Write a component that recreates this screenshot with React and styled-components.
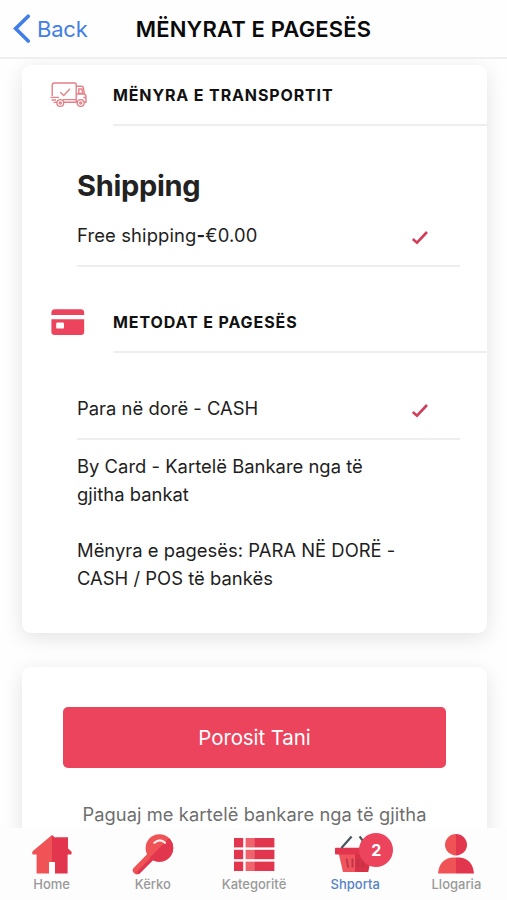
import React from 'react';
import styled, { createGlobalStyle } from 'styled-components';

const red = '#eb445c';

const App = () => {
  return (
    <Screen>
      <GlobalStyle />
      <Header>
        <Back>
          <svg width="18" height="30" viewBox="0 0 18 30">
            <path d="M15.2 2.2 L2.6 14.6 L15.2 27" />
          </svg>
          <span>Back</span>
        </Back>
        <h1>MËNYRAT E PAGESËS</h1>
      </Header>
      <Content>
        <Card $height={568}>
          <Section>
            <TruckIcon />
            <SectionTitle $spacing="0.87px">MËNYRA E TRANSPORTIT</SectionTitle>
          </Section>
          <Options $top={41}>
            <h2>Shipping</h2>
            <Option>
              <Text $spacing="0.14px">
                Free shipping<b>-</b>€0.00
              </Text>
              <CheckIcon />
            </Option>
          </Options>
          <Section $top={25}>
            <CardIcon />
            <SectionTitle $spacing="0.9px">METODAT E PAGESËS</SectionTitle>
          </Section>
          <Options $top={26}>
            <Option>
              <Text>Para në dorë - CASH</Text>
              <CheckIcon />
            </Option>
            <Note $top={12}>
              <Text>By Card - Kartelë Bankare nga të</Text>
              <Text>gjitha bankat</Text>
            </Note>
            <Note $top={28}>
              <Text>Mënyra e pagesës: PARA NË DORË -</Text>
              <Text>CASH / POS të bankës</Text>
            </Note>
          </Options>
        </Card>
        <Card $height={300}>
          <Order>
            <button type="button">Porosit Tani</button>
            <p>Paguaj me kartelë bankare nga të gjitha</p>
          </Order>
        </Card>
      </Content>
      <TabBar>
        {tabs.map((t) => (
          <Tab key={t.label} $active={t.badge}>
            <IconBox>
              {t.icon}
              {t.badge && <Badge>{t.badge}</Badge>}
            </IconBox>
            <span>{t.label}</span>
          </Tab>
        ))}
      </TabBar>
    </Screen>
  );
};

//Icons
const CheckIcon = () => (
  <Check width="18" height="15" viewBox="0 0 18 15">
    <path d="M1.8 9 L6 12.7 L16 2" fill="none" stroke="#d03f59" strokeWidth="2.6" />
  </Check>
);

const TruckIcon = () => (
  <svg width="37" height="26" viewBox="0 0 37 26" fill="none" stroke="#e58087" strokeWidth="1.4">
    <path d="M2.2 14V3.2Q2.2 1 4.4 1H24.6Q26.2 1 26.2 2.6V20.3H13.6" />
    <path d="M26.2 4.3H31.6Q33 4.3 33.4 5.8L34.4 12Q36 12.6 36 14.4V20.3H33.8M27.6 20.3H26.2" />
    <path d="M28.8 7H32L32.7 11.5H28.8ZM26.2 12H34.4M33.4 15.5H36" />
    <path d="M0.5 15.4H9M1.5 18H6M3.5 20.4H7M13 17.6H26" />
    <path d="M10.3 10.3L13.7 13.6L20 6.8" />
    <circle cx="10.3" cy="21" r="3.4" />
    <circle cx="10.3" cy="21" r="1" />
    <circle cx="30.7" cy="21" r="3.4" />
    <circle cx="30.7" cy="21" r="1" />
  </svg>
);

const CardIcon = () => (
  <svg width="37" height="26" viewBox="0 0 37 26" fill={red}>
    <path d="M1.4 6V4Q1.4 0.3 4.8 0.3H30.8Q34.2 0.3 34.2 4V6Z" />
    <path
      fillRule="evenodd"
      d="M1.4 10.2H34.2V22.8Q34.2 26 30.8 26H4.8Q1.4 26 1.4 22.8ZM7.4 13.6Q6.2 13.6 6.2 14.8V18.4Q6.2 19.6 7.4 19.6H12.8Q14 19.6 14 18.4V14.8Q14 13.6 12.8 13.6Z"
    />
  </svg>
);

const HomeIcon = () => (
  <svg width="42" height="42" viewBox="0 0 42 42">
    <path d="M21 1L1.6 17.2Q0.2 20.6 3.2 20.6H5.6V39.4H18V28H21Z" fill="#ef5355" />
    <path d="M21 1L24.2 3.7V3.2H37V14.4L40.4 17.4Q41.4 20.6 38.8 20.6H36.6V39.4H24V28H21Z" fill="#e2364f" />
  </svg>
);

const SearchIcon = () => (
  <svg width="42" height="42" viewBox="0 0 42 42">
    <path d="M4.6 36.4L19 21.6" stroke="#ef5355" strokeWidth="7.6" strokeLinecap="round" />
    <path d="M6.6 38.4L20.6 24.4" stroke="#e2364f" strokeWidth="3.4" strokeLinecap="round" />
    <circle cx="27.4" cy="14" r="13.8" fill="#ef5355" />
    <path d="M37.2 4.2A13.8 13.8 0 0 1 17.6 23.8Z" fill="#e2364f" />
    <path d="M22.4 8.8Q28 3.8 33 8.8" fill="none" stroke="#fff0ee" strokeWidth="2.2" strokeLinecap="round" />
  </svg>
);

const ListIcon = () => (
  <svg width="42" height="42" viewBox="0 0 42 42">
    {[4, 15.8, 27.6].map((y) => (
      <g key={y}>
        <rect x="1" y={y} width="9.2" height="9.4" fill="#e2364f" />
        <rect x="12.6" y={y} width="8.6" height="9.4" fill="#f0636c" />
        <rect x="21.2" y={y} width="20.2" height="9.4" fill="#e2364f" />
      </g>
    ))}
  </svg>
);

const BasketIcon = () => (
  <svg width="42" height="42" viewBox="0 0 42 42">
    <path d="M4.6 19H21V38H9Z" fill="#f0545c" />
    <path d="M21 19H38.4L34.2 38H21Z" fill="#d93147" />
    <path d="M12.6 24.6L14.2 33.6M18.4 24.6V33.6M24 24.6V33.6M29.6 24.6L28.2 33.6" stroke="#b93447" strokeWidth="1.7" />
    <rect x="1" y="13.8" width="40" height="6.6" rx="0.8" fill="#e2364f" />
    <path d="M7.4 14L17.6 2.4M25.6 2.4L34 14" stroke="#48565e" strokeWidth="2.2" />
  </svg>
);

const UserIcon = () => (
  <svg width="42" height="42" viewBox="0 0 42 42">
    <path d="M21 0A11 10.7 0 0 0 21 21.4Z" fill="#ef5355" />
    <path d="M21 0A11 10.7 0 0 1 21 21.4Z" fill="#e2364f" />
    <path d="M21 23.4H17.4Q4.2 25 3 39.6H21Z" fill="#ef5355" />
    <path d="M21 23.4H24.6Q37.8 25 39 39.6H21Z" fill="#e2364f" />
  </svg>
);

const tabs = [
  { label: 'Home', icon: <HomeIcon /> },
  { label: 'Kërko', icon: <SearchIcon /> },
  { label: 'Kategoritë', icon: <ListIcon /> },
  { label: 'Shporta', icon: <BasketIcon />, badge: 2 },
  { label: 'Llogaria', icon: <UserIcon /> },
];

const GlobalStyle = createGlobalStyle`
  * {
    margin: 0;
    padding: 0;
    box-sizing: border-box;
  }
  body {
    font-family: Inter, 'Liberation Sans', sans-serif;
    background: #fefefe;
  }
  svg {
    display: block;
    flex-shrink: 0;
  }
`;

const Screen = styled.div`
  display: flex;
  flex-direction: column;
  height: 900px;
  overflow: hidden;
`;

const Header = styled.header`
  display: grid;
  grid-template-columns: 1fr auto 1fr;
  align-items: center;
  height: 59px;
  flex-shrink: 0;
  border-bottom: 2px solid #efefef;
  background: #fefefe;
  h1 {
    font-size: 22px;
    font-weight: 600;
    letter-spacing: 0.16px;
    white-space: nowrap;
    color: #0a0a0a;
  }
`;

const Back = styled.div`
  display: flex;
  align-items: center;
  gap: 6px;
  padding-left: 13px;
  color: #417fe6;
  font-size: 22px;
  letter-spacing: -0.2px;
  path {
    fill: none;
    stroke: #417fe6;
    stroke-width: 3.6;
    stroke-linecap: round;
  }
`;

const Content = styled.main`
  display: flex;
  flex-direction: column;
  gap: 34px;
  flex: 1;
  min-height: 0;
  overflow: hidden;
  padding: 6px 20px 0 22px;
`;

const Card = styled.section`
  height: ${(p) => p.$height}px;
  flex-shrink: 0;
  border-radius: 9px;
  background: #fff;
  box-shadow: 0 5px 20px rgba(0, 0, 0, 0.11);
`;

const Section = styled.div`
  display: flex;
  gap: 26px;
  padding-left: 28px;
  padding-top: ${(p) => p.$top || 0}px;
  svg {
    margin-top: 17px;
  }
`;

const SectionTitle = styled.h3`
  flex: 1;
  height: 61px;
  line-height: 61px;
  border-bottom: 2px solid #eee;
  font-size: 16px;
  font-weight: 700;
  letter-spacing: ${(p) => p.$spacing};
  white-space: nowrap;
  color: #111;
`;

const Options = styled.div`
  padding: ${(p) => p.$top}px 27px 0 55px;
  h2 {
    margin-bottom: 1px;
    font-size: 29px;
    line-height: 38px;
    font-weight: 700;
    letter-spacing: -0.3px;
    color: #222;
  }
`;

const Option = styled.div`
  display: flex;
  align-items: center;
  justify-content: space-between;
  height: 61px;
  padding: 0 31px 2px 0;
  border-bottom: 2px solid #eee;
`;

const Check = styled.svg`
  margin-top: 6px;
`;

const Text = styled.p`
  font-size: 18.4px;
  line-height: 28px;
  letter-spacing: ${(p) => p.$spacing || '0.02px'};
  white-space: nowrap;
  color: #1e1e1e;
`;

const Note = styled.div`
  padding-top: ${(p) => p.$top}px;
`;

const Order = styled.div`
  display: flex;
  flex-direction: column;
  padding: 40px 41px 0;
  text-align: center;
  button {
    height: 61px;
    border: none;
    border-radius: 5px;
    background: ${red};
    color: #fff;
    font-family: inherit;
    font-size: 20.5px;
    letter-spacing: -0.1px;
  }
  p {
    margin-top: 32px;
    font-size: 18.3px;
    line-height: 28px;
    letter-spacing: 0.08px;
    white-space: nowrap;
    color: #6e6e6e;
  }
`;

const TabBar = styled.nav`
  position: relative;
  display: grid;
  grid-template-columns: repeat(5, 1fr);
  height: 72px;
  flex-shrink: 0;
  padding-left: 1px;
  background: #fdfdfd;
`;

const Tab = styled.div`
  display: flex;
  flex-direction: column;
  align-items: center;
  padding-top: 6px;
  color: ${(p) => (p.$active ? '#5682c8' : '#999')};
  font-size: 13px;
  line-height: 16px;
  font-weight: 500;
`;

const IconBox = styled.div`
  position: relative;
  height: 42px;
`;

const Badge = styled.span`
  position: absolute;
  top: -1px;
  left: 25px;
  width: 34px;
  height: 34px;
  border-radius: 50%;
  background: ${red};
  color: #fff;
  font-size: 16px;
  font-weight: 700;
  line-height: 34px;
  text-align: center;
`;

export default App;
